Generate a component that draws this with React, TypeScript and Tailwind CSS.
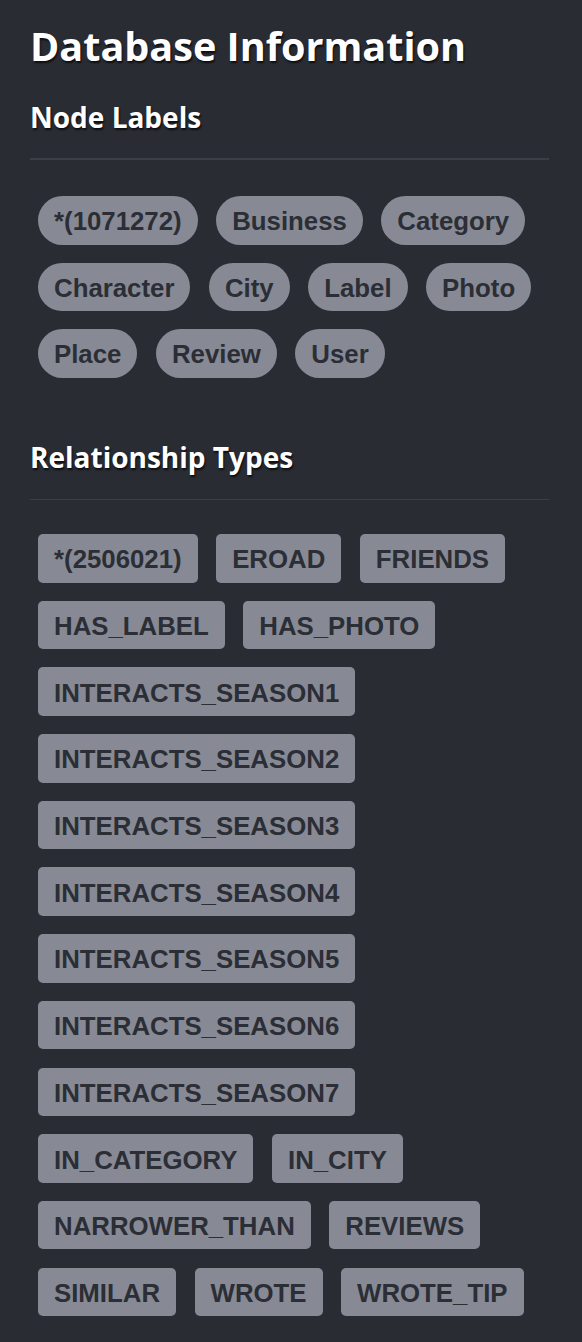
import React from "react";

const nodeLabels = ["*(1071272)", "Business", "Category", "Character", "City", "Label", "Photo", "Place", "Review", "User"];
const relTypes = [
  "*(2506021)",
  "EROAD",
  "FRIENDS",
  "HAS_LABEL",
  "HAS_PHOTO",
  "INTERACTS_SEASON1",
  "INTERACTS_SEASON2",
  "INTERACTS_SEASON3",
  "INTERACTS_SEASON4",
  "INTERACTS_SEASON5",
  "INTERACTS_SEASON6",
  "INTERACTS_SEASON7",
  "IN_CATEGORY",
  "IN_CITY",
  "NARROWER_THAN",
  "REVIEWS",
  "SIMILAR",
  "WROTE",
  "WROTE_TIP",
];

const headFont = "[font-family:'Open_Sans','Noto_Sans',sans-serif]";

function Chip({ text, pill }: { text: string; pill: boolean }) {
  return (
    <span
      className={`flex h-[48.5px] items-center bg-[#878a95] px-4 pt-[4px] text-[25.8px] font-bold leading-none text-[#2b2e35] [font-family:'Liberation_Sans',Arial,sans-serif] ${
        pill ? "rounded-full" : "rounded-[5px]"
      }`}
    >
      {text}
    </span>
  );
}

export default function App() {
  return (
    <div className="min-h-screen bg-[#292c33] px-[30px] pt-[22px] pb-[20px]">
      <h1
        className={`${headFont} text-[39.6px] font-bold leading-[48px] text-white [text-shadow:1px_2px_2px_rgba(0,0,0,0.7)]`}
      >
        Database Information
      </h1>
      <h2
        className={`${headFont} mt-[29px] text-[28px] font-bold leading-[36px] text-white [text-shadow:1px_2px_2px_rgba(0,0,0,0.7)]`}
      >
        Node Labels
      </h2>
      <div className="mt-[23px] h-[1.5px] w-[519px] bg-[#3b3e46]" />
      <div className="mt-[36.5px] flex flex-wrap gap-x-[18.5px] gap-y-[18px] pl-2 pr-4">
        {nodeLabels.map((t) => (
          <Chip key={t} text={t} pill />
        ))}
      </div>
      <h2
        className={`${headFont} mt-[61px] text-[28px] font-bold leading-[36px] text-white [text-shadow:1px_2px_2px_rgba(0,0,0,0.7)]`}
      >
        Relationship Types
      </h2>
      <div className="mt-[24px] h-[1.5px] w-[519px] bg-[#3b3e46]" />
      <div className="mt-[34px] flex flex-wrap gap-x-[18.5px] gap-y-[18.2px] pl-2 pr-4">
        {relTypes.map((t) => (
          <Chip key={t} text={t} pill={false} />
        ))}
      </div>
    </div>
  );
}
